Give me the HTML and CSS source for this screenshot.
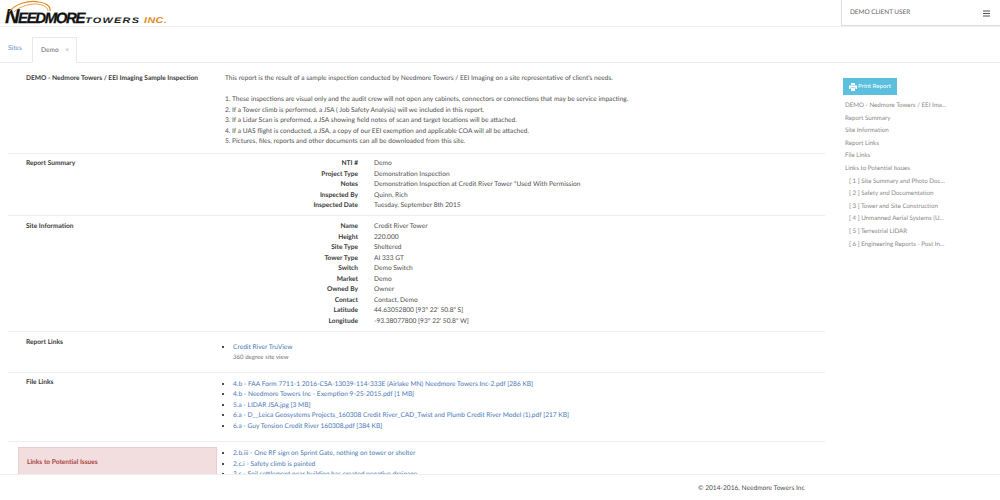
FILE: index.html
```html
<!DOCTYPE html>
<html lang="en">
<head>
<meta charset="utf-8">
<title>Demo Report</title>
<link rel="stylesheet" href="styles.css">
</head>
<body>
<div class="page">
  <header class="topbar">
    <div class="logo">
      <svg class="logo-arc" width="46" height="16" viewBox="0 0 46 16"><path d="M3 12C9 4 22 0 33 2C40 3 45 6 44 11" fill="none" stroke="#e08a1e" stroke-width="1.200"/><path d="M8 12C14 6 26 2.500 34 4.500C39 5.500 42 8 42 11" fill="none" stroke="#e08a1e" stroke-width="0.800"/></svg>
      <span class="logo-main"><span class="logo-n">N</span>EEDMORE</span><span class="logo-sub">TOWERS</span><span class="logo-inc">INC.</span>
    </div>
    <div class="user"><span>DEMO CLIENT USER</span>
      <svg width="7" height="7" viewBox="0 0 7 7"><path d="M0 1H7M0 3.500H7M0 6H7" stroke="#555" stroke-width="1.200"/></svg>
    </div>
  </header>
  <nav class="tabs">
    <a class="tab sites">Sites</a>
    <a class="tab active">Demo <span class="close">×</span></a>
  </nav>
  <div class="body">
    <main class="main">
      <section class="row first">
        <h3 class="title">DEMO - Nedmore Towers / EEI Imaging Sample Inspection</h3>
        <div class="text">
          <p class="intro">This report is the result of a sample inspection conducted by Needmore Towers / EEI Imaging on a site representative of client's needs.</p>
          <p>1. These inspections are visual only and the audit crew will not open any cabinets, connectors or connections that may be service impacting.</p>
          <p>2. If a Tower climb is performed, a JSA ( Job Safety Analysis) will we included in this report.</p>
          <p>3. If a Lidar Scan is preformed, a JSA showing field notes of scan and target locations will be attached.</p>
          <p>4. If a UAS flight is conducted, a JSA, a copy of our EEI exemption and applicable COA will all be attached.</p>
          <p>5. Pictures, files, reports and other documents can all be downloaded from this site.</p>
        </div>
      </section>
      <section class="row summary">
        <h3 class="title">Report Summary</h3>
        <dl class="kv">
          <dt>NTI #</dt><dd>Demo</dd>
          <dt>Project Type</dt><dd>Demonstration Inspection</dd>
          <dt>Notes</dt><dd>Demonstration Inspection at Credit River Tower *Used With Permission</dd>
          <dt>Inspected By</dt><dd>Quinn, Rich</dd>
          <dt>Inspected Date</dt><dd>Tuesday, September 8th 2015</dd>
        </dl>
      </section>
      <section class="row site">
        <h3 class="title">Site Information</h3>
        <dl class="kv">
          <dt>Name</dt><dd>Credit River Tower</dd>
          <dt>Height</dt><dd>220.000</dd>
          <dt>Site Type</dt><dd>Sheltered</dd>
          <dt>Tower Type</dt><dd>AI 333 GT</dd>
          <dt>Switch</dt><dd>Demo Switch</dd>
          <dt>Market</dt><dd>Demo</dd>
          <dt>Owned By</dt><dd>Owner</dd>
          <dt>Contact</dt><dd>Contact, Demo</dd>
          <dt>Latitude</dt><dd>44.63052800 [93° 22' 50.8" S]</dd>
          <dt>Longitude</dt><dd>-93.38077800 [93° 22' 50.8" W]</dd>
        </dl>
      </section>
      <section class="row links">
        <h3 class="title">Report Links</h3>
        <ul class="list">
          <li><a>Credit River TruView</a><div class="note">360 degree site view</div></li>
        </ul>
      </section>
      <section class="row files">
        <h3 class="title">File Links</h3>
        <ul class="list">
          <li><a>4.b - FAA Form 7711-1 2016-CSA-13039-114-333E (Airlake MN) Needmore Towers Inc-2.pdf [286 KB]</a></li>
          <li><a>4.b - Needmore Towers Inc - Exemption 9-25-2015.pdf [1 MB]</a></li>
          <li><a>5.a - LIDAR JSA.jpg [3 MB]</a></li>
          <li><a>6.a - D__Leica Geosystems Projects_160308 Credit River_CAD_Twist and Plumb Credit River Model (1).pdf [217 KB]</a></li>
          <li><a>6.a - Guy Tension Credit River 160308.pdf [384 KB]</a></li>
        </ul>
      </section>
      <section class="row issues">
        <h3 class="title alert">Links to Potential Issues</h3>
        <ul class="list">
          <li><a>2.b.iii - One RF sign on Sprint Gate, nothing on tower or shelter</a></li>
          <li><a>2.c.i - Safety climb is painted</a></li>
          <li><a>3.c - Soil settlement near building has created negative drainage</a></li>
        </ul>
      </section>
    </main>
    <aside class="side">
      <button class="print"><svg width="8" height="8" viewBox="0 0 8 8"><path d="M2 0H6V2H2ZM0 2.500H8V6H6.500V4.500H1.500V6H0ZM2 5H6V8H2Z" fill="#fff"/></svg>Print Report</button>
      <ul class="toc">
        <li>DEMO - Nedmore Towers / EEI Ima...</li>
        <li>Report Summary</li>
        <li>Site Information</li>
        <li>Report Links</li>
        <li>File Links</li>
        <li>Links to Potential Issues</li>
        <li class="sub">[ 1 ] Site Summary and Photo Doc...</li>
        <li class="sub">[ 2 ] Safety and Documentation</li>
        <li class="sub">[ 3 ] Tower and Site Construction</li>
        <li class="sub">[ 4 ] Unmanned Aerial Systems (U...</li>
        <li class="sub">[ 5 ] Terrestrial LIDAR</li>
        <li class="sub">[ 6 ] Engineering Reports - Post In...</li>
      </ul>
    </aside>
  </div>
  <footer class="footer">© 2014-2016, Needmore Towers Inc</footer>
</div>
</body>
</html>
```
FILE: styles.css
```css
* { box-sizing: border-box; }
html, body { margin: 0; padding: 0; }
body { font-family: "Lato", "Open Sans", "Liberation Sans", sans-serif; font-size: 6.620px; line-height: 10.500px; color: #4f4f4f; background: #fff; text-rendering: geometricPrecision; }
.page { position: relative; width: 1000px; height: 500px; overflow: hidden; display: flex; flex-direction: column; }

.topbar { height: 27px; flex: none; display: flex; justify-content: space-between; border-bottom: 1px solid #eee; }
.logo { position: relative; display: flex; align-items: baseline; padding: 9px 0 0 5px; white-space: nowrap; font-family: "Liberation Sans", sans-serif; font-weight: 700; font-style: italic; }
.logo-arc { position: absolute; left: 6px; top: 0; }
.logo-main { font-size: 15px; line-height: 16px; color: #111; letter-spacing: -1.400px; -webkit-text-stroke: 0.300px #111; }
.logo-n { font-size: 20px; }
.logo-sub { display: inline-block; font-size: 8px; letter-spacing: 1px; color: #222; margin: 0 16px 0 1px; transform: scaleX(1.350); transform-origin: left; }
.logo-inc { display: inline-block; font-size: 8.500px; letter-spacing: 0.400px; color: #e08a1e; margin-left: 2px; transform: scaleX(1.250); transform-origin: left; }
.user { width: 159px; height: 26px; margin-left: auto; border: 1px solid #ddd; border-top: 0; border-right: 0; display: flex; align-items: center; justify-content: space-between; padding: 2px 10px 0 8px; color: #666; font-size: 6.400px; }

.tabs { height: 36px; flex: none; display: flex; align-items: flex-end; border-bottom: 1px solid #e8e8e8; }
.tab { height: 25px; padding: 6px 0 0 8px; color: #6a93c4; }
.sites { width: 32px; }
.tab.active { height: 26px; margin-bottom: -1px; padding: 7px 0 0 8px; color: #666; background: #fff; border: 1px solid #e8e8e8; border-bottom-color: #fff; width: 45px; white-space: nowrap; }
.close { color: #aaa; margin-left: 5px; }

.body { flex: 1; display: flex; min-height: 0; }
.main { width: 825px; flex: none; padding-left: 8px; }
.side { flex: 1; padding: 15px 0 0 18px; }

.row { display: grid; grid-template-columns: 217px 1fr; align-items: start; border-bottom: 1px solid #eee; }
.first { height: 91px; padding-top: 10px; }
.summary { height: 62px; padding-top: 4px; }
.site { height: 116px; padding-top: 5px; }
.links { height: 41px; padding-top: 5px; }
.files { height: 69px; padding-top: 3px; }
.issues { padding-top: 5px; border-bottom: 0; }
.title { margin: 0; padding-left: 18px; font-size: 6.620px; line-height: 10.500px; font-weight: 700; color: #3a3a3a; white-space: nowrap; }
.alert { margin-left: 10px; padding: 9px 0 9px 8px; width: 199px; height: 40px; background: #f2dede; color: #a94442; border: 1px solid #ebccd1; }
.text p { margin: 0; }
.text .intro { margin-bottom: 10.500px; }
.kv { margin: 0; display: grid; grid-template-columns: 133px 1fr; column-gap: 16px; }
.kv dt { font-weight: 700; text-align: right; color: #3a3a3a; }
.kv dd { margin: 0; }
.list { margin: 0; padding: 0 0 0 8px; list-style: square; }
.links .list { margin-top: 5px; }
.files .title { margin-top: 1px; }
.files .list { margin-top: 2.500px; }
.issues .list { margin-top: 1px; }
.list a { color: #4a78b5; }
.note { color: #777; font-size: 6.100px; line-height: 10.500px; }

.print { display: flex; align-items: center; gap: 1px; width: 54px; height: 17px; padding: 0 0 0 6px; background: #5bc0de; border: 0; color: #fff; font: inherit; font-size: 6.200px; white-space: nowrap; }
.toc { list-style: none; margin: 5px 0 0; padding: 0 0 0 2px; color: #888; font-size: 6.200px; line-height: 12.600px; white-space: nowrap; }
.toc .sub { padding-left: 4px; }

.footer { position: absolute; left: 0; right: 0; bottom: 0; height: 26px; background: #fff; border-top: 1px solid #eee; padding: 8px 0 0 698px; color: #4f4f4f; }
```
